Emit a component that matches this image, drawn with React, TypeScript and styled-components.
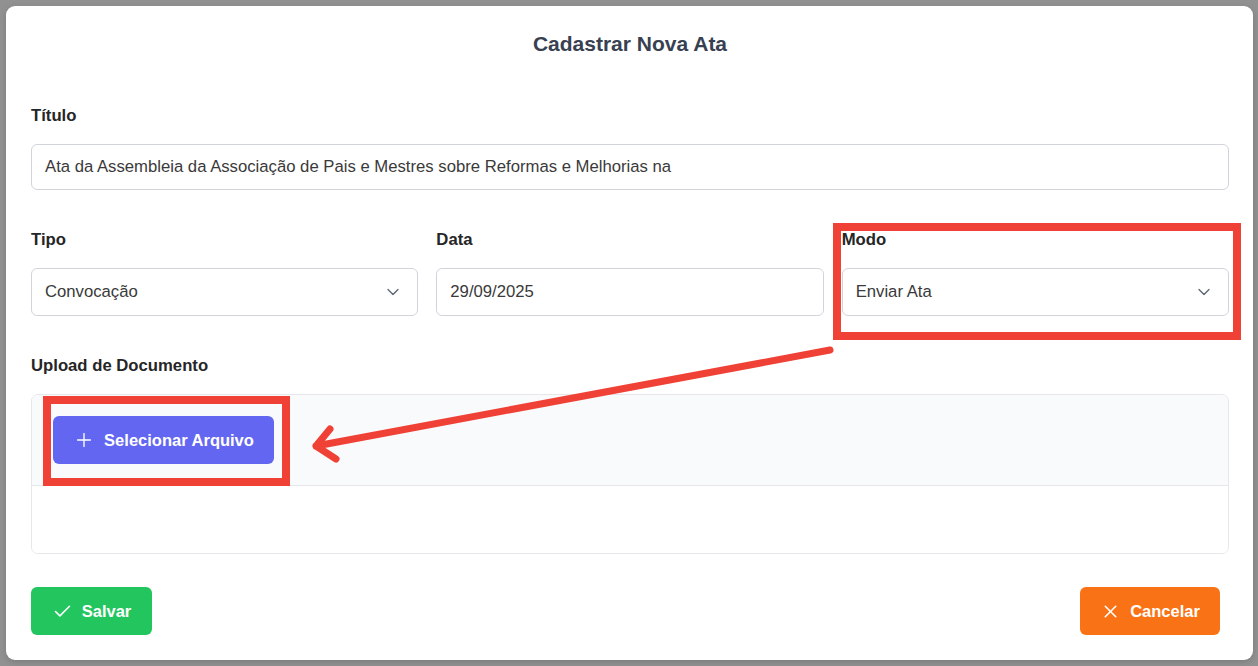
import React from "react";
import styled, { createGlobalStyle } from "styled-components";
import { ChevronDown, Plus, Check, X } from "lucide-react";

const GlobalStyle = createGlobalStyle`
  html, body { margin: 0; padding: 0; }
  body {
    background: #919191;
    font-family: "Liberation Sans", Arial, sans-serif;
    overflow: hidden;
  }
  * { box-sizing: border-box; }
`;

const Page = styled.div`
  width: 1258px;
  height: 666px;
  padding: 6px 5px 0 6px;
  position: relative;
`;

const Modal = styled.div`
  width: 1247px;
  height: 654px;
  background: #ffffff;
  border-radius: 9px;
  padding: 26px 24px 25px 25px;
  display: flex;
  flex-direction: column;
  box-shadow: 0 2px 6px rgba(0, 0, 0, 0.15);
`;

const Title = styled.h2`
  margin: 0;
  text-align: center;
  font-size: 21px;
  line-height: 24px;
  font-weight: 700;
  color: #374151;
`;

const Field = styled.div<{ $mt: number }>`
  display: flex;
  flex-direction: column;
  margin-top: ${(p) => p.$mt}px;
`;

const Label = styled.label`
  font-size: 16.7px;
  line-height: 20px;
  font-weight: 700;
  color: #262626;
  margin-top: 1px;
  margin-bottom: 18px;
`;

const Input = styled.div<{ $h: number }>`
  height: ${(p) => p.$h}px;
  border: 1px solid #d1d5db;
  border-radius: 6px;
  padding: 0 14px 0 13px;
  display: flex;
  align-items: center;
  justify-content: space-between;
  font-size: 16.7px;
  color: #3a3a3a;
  background: #fff;
  white-space: nowrap;
  overflow: hidden;
`;

const Row = styled.div`
  display: grid;
  grid-template-columns: repeat(3, 1fr);
  column-gap: 18px;
  margin-top: 39px;
`;

const Col = styled.div`
  display: flex;
  flex-direction: column;
`;

const Chevron = styled(ChevronDown)`
  color: #5f6672;
  flex: none;
`;

const UploadBox = styled.div`
  border: 1px solid #e5e7eb;
  border-radius: 7px;
  overflow: hidden;
  display: flex;
  flex-direction: column;
  height: 160px;
`;

const UploadTop = styled.div`
  background: #f9fafb;
  padding: 21px 21px;
  border-bottom: 1px solid #e5e7eb;
  display: flex;
`;

const UploadBottom = styled.div`
  flex: 1;
  background: #fff;
`;

const Btn = styled.button<{ $bg: string; $w: number }>`
  height: 48px;
  width: ${(p) => p.$w}px;
  border: none;
  border-radius: 6px;
  background: ${(p) => p.$bg};
  color: #fff;
  font-family: "Liberation Sans", Arial, sans-serif;
  font-weight: 700;
  font-size: 16.5px;
  display: flex;
  align-items: center;
  justify-content: center;
  gap: 9px;
  padding: 0;
  cursor: pointer;
`;

const Footer = styled.div`
  display: flex;
  justify-content: space-between;
  margin-top: 33px;
  padding-right: 9px;
`;

const Annotations = styled.svg`
  position: absolute;
  left: 0;
  top: 0;
  pointer-events: none;
`;

export default function App() {
  return (
    <>
      <GlobalStyle />
      <Page>
        <Modal>
          <Title>Cadastrar Nova Ata</Title>
          <Field $mt={49}>
            <Label>Título</Label>
            <Input $h={46}>
              Ata da Assembleia da Associação de Pais e Mestres sobre Reformas e Melhorias na
            </Input>
          </Field>
          <Row>
            <Col>
              <Label>Tipo</Label>
              <Input $h={48}>
                Convocação
                <Chevron size={20} strokeWidth={1.6} />
              </Input>
            </Col>
            <Col>
              <Label>Data</Label>
              <Input $h={48}>29/09/2025</Input>
            </Col>
            <Col>
              <Label>Modo</Label>
              <Input $h={48}>
                Enviar Ata
                <Chevron size={20} strokeWidth={1.6} />
              </Input>
            </Col>
          </Row>
          <Field $mt={39}>
            <Label>Upload de Documento</Label>
            <UploadBox>
              <UploadTop>
                <Btn $bg="#6366f1" $w={221}>
                  <Plus size={22} strokeWidth={1.5} />
                  Selecionar Arquivo
                </Btn>
              </UploadTop>
              <UploadBottom />
            </UploadBox>
          </Field>
          <Footer>
            <Btn $bg="#22c55e" $w={121}>
              <Check size={21} strokeWidth={1.8} />
              Salvar
            </Btn>
            <Btn $bg="#f97316" $w={140}>
              <X size={21} strokeWidth={1.8} />
              Cancelar
            </Btn>
          </Footer>
        </Modal>
        <Annotations width={1258} height={666} viewBox="0 0 1258 666">
          <rect x={837} y={227} width={400} height={109} fill="none" stroke="#ef4136" strokeWidth={8} />
          <rect x={47} y={400} width={239} height={82} fill="none" stroke="#ef4136" strokeWidth={8} />
          <path
            d="M 830 350 L 316 446 M 330 429 L 316 446 L 336 459"
            fill="none"
            stroke="#ef4136"
            strokeWidth={7}
            strokeLinecap="round"
            strokeLinejoin="round"
          />
        </Annotations>
      </Page>
    </>
  );
}
